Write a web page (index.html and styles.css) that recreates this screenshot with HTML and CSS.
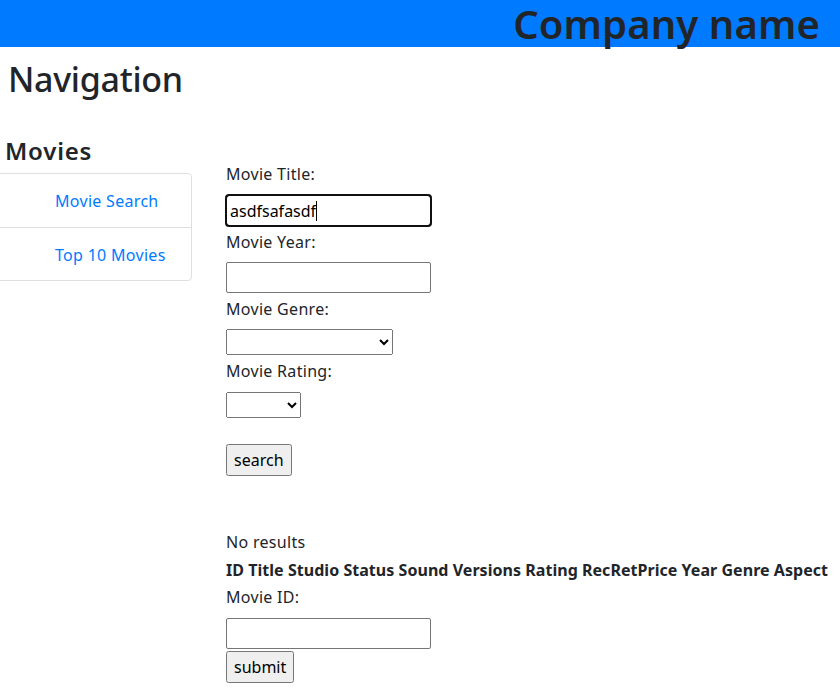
FILE: index.html
```html
<!DOCTYPE html>
<html lang="en">
<head>
<meta charset="utf-8">
<title>Movies</title>
<link rel="stylesheet" href="styles.css">
</head>
<body>
<header class="topbar">
  <h1 class="brand">Company name</h1>
</header>
<h2 class="nav-title">Navigation</h2>
<div class="layout">
  <aside class="sidebar">
    <h4 class="side-title">Movies</h4>
    <ul class="list-group">
      <li class="list-item"><a class="list-link" href="#">Movie Search</a></li>
      <li class="list-item"><a class="list-link" href="#">Top 10 Movies</a></li>
    </ul>
  </aside>
  <main class="main">
    <form class="search-form">
      <label class="lbl lbl-title" for="title">Movie Title:</label>
      <span class="caret-wrap"><input class="txt txt-focus" id="title" type="text" value="asdfsafasdf"></span>
      <label class="lbl lbl-year" for="year">Movie Year:</label>
      <input class="txt txt-year" id="year" type="text">
      <label class="lbl lbl-genre" for="genre">Movie Genre:</label>
      <select class="sel sel-genre" id="genre"><option></option></select>
      <label class="lbl lbl-rating" for="rating">Movie Rating:</label>
      <select class="sel sel-rating" id="rating"><option></option></select>
      <button class="btn btn-search" type="button">search</button>
    </form>
    <div class="results">
      <div class="no-results">No results</div>
      <div class="result-head">ID Title Studio Status Sound Versions Rating RecRetPrice Year Genre Aspect</div>
    </div>
    <form class="id-form">
      <label class="lbl lbl-id" for="movieid">Movie ID:</label>
      <input class="txt txt-id" id="movieid" type="text">
      <button class="btn btn-submit" type="button">submit</button>
    </form>
  </main>
</div>
</body>
</html>
```
FILE: styles.css
```css
html, body {
  margin: 0;
  padding: 0;
}
body {
  font-family: "Noto Sans", "Open Sans", sans-serif;
  font-size: 16px;
  line-height: 24px;
  color: #212529;
  background: #fff;
  letter-spacing: 0.3px;
  overflow: hidden;
}
.topbar {
  height: 47px;
  background: #007bff;
  display: flex;
  justify-content: flex-end;
  padding-right: 20px;
}
.brand {
  margin: 0;
  font-size: 40px;
  line-height: 47px;
  font-weight: 600;
  letter-spacing: 0.1px;
  color: #212529;
  white-space: nowrap;
}
.nav-title {
  margin: 12px 0 0 8px;
  font-size: 34px;
  line-height: 40px;
  font-weight: 500;
  letter-spacing: -0.3px;
}
.layout {
  display: flex;
  align-items: flex-start;
  margin-top: 36px;
}
.sidebar {
  width: 202px;
  margin-left: -10px;
  flex: none;
}
.side-title {
  margin: 0 0 8px 0;
  padding-top: 1px;
  padding-left: 15px;
  font-size: 24px;
  line-height: 29px;
  font-weight: 600;
  letter-spacing: 0.8px;
}
.list-group {
  list-style: none;
  margin: 0;
  padding: 0;
  border: 1px solid #dfdfdf;
  border-radius: 4px;
}
.list-item {
  padding: 15px 10px 14px 64px;
  line-height: 24px;
}
.list-item + .list-item {
  border-top: 1px solid #dfdfdf;
  padding-bottom: 13px;
}
.list-link {
  color: #007bff;
  text-decoration: none;
  white-space: nowrap;
}
.main {
  margin-left: 34px;
  padding-top: 27px;
  flex: 1;
  min-width: 0;
}
.search-form, .id-form {
  display: flex;
  flex-direction: column;
  align-items: flex-start;
  margin: 0;
}
.lbl {
  display: block;
  line-height: 24px;
}
.lbl-title { margin-bottom: 9px; }
.lbl-year { margin-bottom: 8px; }
.lbl-genre { margin-bottom: 8px; }
.lbl-rating { margin-bottom: 9px; }
.lbl-id { margin-bottom: 9px; }
.txt {
  box-sizing: border-box;
  width: 205px;
  height: 31px;
  margin: 0;
  padding: 0 3px;
  border: 1px solid #767676;
  border-radius: 2px;
  font-family: inherit;
  font-size: 16px;
  color: #000;
  background: #fff;
}
.caret-wrap {
  position: relative;
  display: block;
  margin-bottom: 4px;
}
.caret-wrap::after {
  content: "";
  position: absolute;
  left: 90px;
  top: 6px;
  width: 1px;
  height: 20px;
  background: #000;
}
.txt-focus {
  display: block;
  outline: 2px solid #101010;
  outline-offset: -1px;
  border-color: #101010;
  border-radius: 3px;
}
.txt-year { margin-bottom: 4px; }
.txt-id { margin-bottom: 2px; }
.sel {
  box-sizing: border-box;
  height: 26px;
  margin: 0;
  font-family: inherit;
  font-size: 16px;
}
.sel-genre { width: 167px; margin-bottom: 4px; }
.sel-rating { width: 75px; margin-bottom: 26px; }
.btn {
  box-sizing: border-box;
  height: 32px;
  margin: 0;
  padding: 0 6px;
  font-family: inherit;
  font-size: 16px;
  color: #000;
}
.results {
  margin-top: 54px;
}
.no-results {
  line-height: 24px;
}
.result-head {
  margin-top: 4px;
  font-weight: 700;
  letter-spacing: 0.04px;
  white-space: nowrap;
  line-height: 24px;
}
.id-form {
  margin-top: 3px;
}
```
